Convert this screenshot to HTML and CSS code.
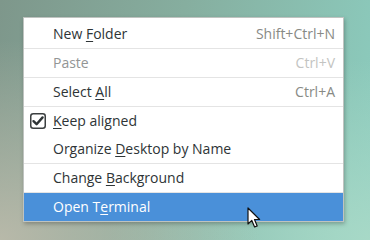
FILE: index.html
```html
<!DOCTYPE html>
<html>
<head>
  <meta charset="utf-8">
  <title>Desktop menu</title>
  <link rel="stylesheet" href="styles.css">
</head>
<body>
  <ul class="menu">
    <li class="item sep"><span class="slot"></span><span class="label">New <u>F</u>older</span><span class="accel">Shift+Ctrl+N</span></li>
    <li class="item sep disabled"><span class="slot"></span><span class="label">Paste</span><span class="accel">Ctrl+V</span></li>
    <li class="item sep"><span class="slot"></span><span class="label">Select <u>A</u>ll</span><span class="accel">Ctrl+A</span></li>
    <li class="item">
      <span class="slot">
        <svg class="check" width="16" height="16" viewBox="0 0 16 16">
          <rect x="0.75" y="0.75" width="14.5" height="14.5" rx="2.5" fill="#fff" stroke="#3b3f40" stroke-width="1.5"/>
          <path d="M3.5 8.2 L6.6 11.2 L12.6 4.4" fill="none" stroke="#2e3436" stroke-width="2.4" stroke-linecap="round" stroke-linejoin="round"/>
        </svg>
      </span>
      <span class="label"><u>K</u>eep aligned</span><span class="accel"></span>
    </li>
    <li class="item sep"><span class="slot"></span><span class="label">Organize <u>D</u>esktop by Name</span><span class="accel"></span></li>
    <li class="item sep"><span class="slot"></span><span class="label">Change <u>B</u>ackground</span><span class="accel"></span></li>
    <li class="item active"><span class="slot"></span><span class="label">Open T<u>e</u>rminal</span><span class="accel"></span></li>
  </ul>

  <!-- mouse pointer -->
  <svg class="pointer" width="14" height="22" viewBox="0 0 14 22">
    <path d="M1 1 L1 17 L4.8 13.4 L7.6 20 L10.2 18.9 L7.5 12.5 L12.6 12.5 Z" fill="#fff" stroke="#111" stroke-width="1.2" stroke-linejoin="round"/>
  </svg>
</body>
</html>
```

FILE: styles.css
```css
html, body{
  margin: 0;
  height: 100%;
}
body{
  position: relative;
  padding: 17px 0 0 23px;
  box-sizing: border-box;
  font-family: "Open Sans", "Noto Sans", sans-serif;
  font-size: 14px;
  overflow: hidden;
  background:
    radial-gradient(ellipse 260px 200px at 0% 100%, rgba(190,188,172,0.9), rgba(190,188,172,0) 100%),
    radial-gradient(ellipse 260px 180px at 100% 100%, rgba(170,218,200,0.9), rgba(170,218,200,0) 100%),
    linear-gradient(100deg, #7e978b 0%, #86ae9f 45%, #8ccdbf 100%);
}
.menu{
  list-style: none;
  margin: 0;
  padding: 2px 0 0 0;
  width: 321px;
  box-sizing: border-box;
  background-color: #fff;
  border: 1px solid #bfc3c0;
  box-shadow: 1px 2px 4px rgba(0,0,0,0.25);
}
.item{
  display: grid;
  grid-template-columns: 29px 1fr auto;
  align-items: center;
  height: 28px;
  padding-right: 8px;
  color: #2e3436;
  line-height: 28px;
}
.sep{
  border-bottom: 1px solid #e4e4e4;
}
.slot{
  display: flex;
  align-items: center;
  height: 28px;
  padding-left: 6px;
}
.check{
  display: block;
}
.label u{
  text-decoration-thickness: 1px;
  text-underline-offset: 2px;
}
.accel{
  color: #888a85;
}
.disabled .label{
  color: #929595;
}
.disabled .accel{
  color: #c3c4c2;
}
.active{
  background-color: #4a90d9;
  color: #fff;
}
.pointer{
  position: absolute;
  left: 247px;
  top: 207px;
}
```
